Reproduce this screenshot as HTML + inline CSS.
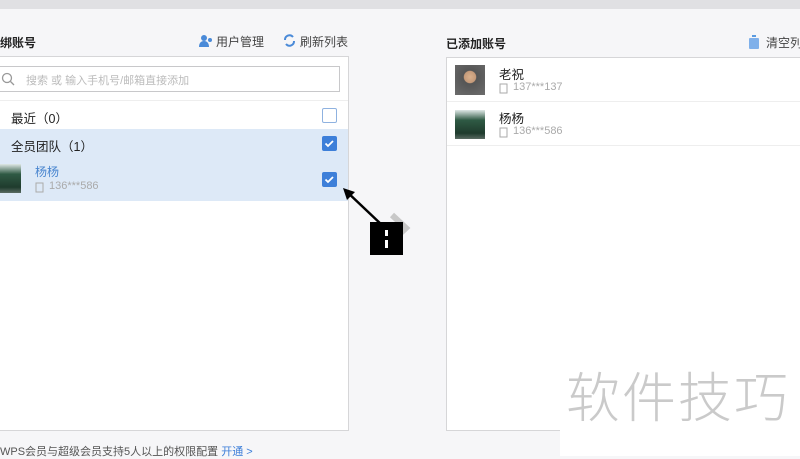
<!DOCTYPE html>
<html><head><meta charset="utf-8"><style>
*{margin:0;padding:0;box-sizing:border-box}
body{width:800px;height:456px;overflow:hidden;background:#f6f6f8;font-family:"Liberation Sans","Noto Sans CJK SC",sans-serif;position:relative;color:#222}
.a{position:absolute}
.t{font-size:12px;white-space:nowrap}
.cb{position:absolute;width:15px;height:15px;border-radius:2px}
.on{background:#3d7fd9}
.off{border:1.5px solid #8fb2e0;background:#fff}
.ph{font-size:11px;color:#aaa}
.av{position:absolute;background:linear-gradient(#dfe8e6 0%,#2f5a44 35%,#1f3b2d 80%,#5a6b62 100%)}
</style></head><body>
<div class="a" style="left:0;top:0;width:800px;height:9px;background:#e0e0e3"></div>

<div class="a t" style="left:0;top:34px;font-weight:bold;font-size:12px">绑账号</div>
<svg class="a" style="left:198px;top:34px" width="16" height="14"><circle cx="6" cy="4" r="3" fill="#4a8ad8"/><path d="M1 13c0-4 2-6 5-6s5 2 5 6z" fill="#4a8ad8"/><circle cx="12" cy="6" r="2" fill="#4a8ad8"/></svg>
<div class="a t" style="left:216px;top:33px;color:#444">用户管理</div>
<svg class="a" style="left:283px;top:34px" width="13" height="13"><path d="M2 6a4.5 4.5 0 0 1 8-3M11 7a4.5 4.5 0 0 1-8 3" stroke="#4a8ad8" stroke-width="2" fill="none"/></svg>
<div class="a t" style="left:300px;top:33px;color:#444">刷新列表</div>

<div class="a" style="left:-1px;top:56px;width:350px;height:375px;background:#fff;border:1px solid #d6d6d8"></div>
<div class="a" style="left:-1px;top:66px;width:341px;height:26px;border:1px solid #c8c8ca;background:#fff"></div>
<svg class="a" style="left:1px;top:72px" width="14" height="14"><circle cx="6" cy="6" r="4.5" stroke="#999" stroke-width="1.3" fill="none"/><path d="M9.5 9.5l3.5 3.5" stroke="#999" stroke-width="1.3"/></svg>
<div class="a t" style="left:26px;top:72px;color:#bbb;font-size:11px">搜索 或 输入手机号/邮箱直接添加</div>
<div class="a" style="left:0;top:100px;width:348px;height:1px;background:#eee"></div>
<div class="a t" style="left:11px;top:108px;font-size:12.5px">最近（0）</div>
<div class="cb off" style="left:322px;top:108px"></div>
<div class="a" style="left:0;top:129px;width:348px;height:72px;background:#dde9f7"></div>
<div class="a t" style="left:11px;top:136px;font-size:12.5px">全员团队（1）</div>
<div class="cb on" style="left:322px;top:136px"><svg width="15" height="15"><path d="M3.5 7.5l2.5 2.5 5-5" stroke="#fff" stroke-width="1.8" fill="none"/></svg></div>
<div class="av" style="left:0;top:164px;width:21px;height:29px"></div>
<div class="a t" style="left:35px;top:163px;color:#4a86cf;font-size:12px">杨杨</div>
<svg class="a" style="left:35px;top:182px" width="9" height="11"><rect x="1" y="1" width="7" height="9" stroke="#aaa" fill="none"/></svg>
<div class="a ph" style="left:49px;top:180px">136***586</div>
<div class="cb on" style="left:322px;top:172px"><svg width="15" height="15"><path d="M3.5 7.5l2.5 2.5 5-5" stroke="#fff" stroke-width="1.8" fill="none"/></svg></div>

<svg class="a" style="left:340px;top:185px" width="75" height="75"><path d="M52 30l14 13-14 13" stroke="#c8c8c8" stroke-width="6" fill="none"/><path d="M5 5l38 36" stroke="#000" stroke-width="2.5"/><path d="M3 3l12 4-8 8z" fill="#000"/><rect x="30" y="37" width="33" height="33" fill="#000"/><rect x="45" y="45" width="3" height="6" fill="#fff"/><rect x="45" y="55" width="3" height="8" fill="#fff"/></svg>

<div class="a t" style="left:446px;top:35px;font-weight:bold">已添加账号</div>
<svg class="a" style="left:748px;top:35px" width="12" height="14"><rect x="4" y="0" width="4" height="2" fill="#5b9be0"/><rect x="1" y="3" width="10" height="11" rx="1" fill="#7fb0ea"/></svg>
<div class="a t" style="left:766px;top:34px;color:#444">清空列表</div>
<div class="a" style="left:446px;top:57px;width:360px;height:374px;background:#fff;border:1px solid #d6d6d8"></div>
<div class="a" style="left:455px;top:65px;width:30px;height:30px;background:radial-gradient(circle at 50% 40%,#d9b08c 0,#c59a7a 25%,#555 28%,#6c6c6c 100%)"></div>
<div class="a t" style="left:499px;top:64px;font-size:12.5px">老祝</div>
<svg class="a" style="left:499px;top:83px" width="9" height="11"><rect x="1" y="1" width="7" height="9" stroke="#aaa" fill="none"/></svg>
<div class="a ph" style="left:513px;top:81px">137***137</div>
<div class="a" style="left:447px;top:101px;width:353px;height:1px;background:#eee"></div>
<div class="av" style="left:455px;top:110px;width:30px;height:29px"></div>
<div class="a t" style="left:499px;top:108px;font-size:12.5px">杨杨</div>
<svg class="a" style="left:499px;top:127px" width="9" height="11"><rect x="1" y="1" width="7" height="9" stroke="#aaa" fill="none"/></svg>
<div class="a ph" style="left:513px;top:125px">136***586</div>
<div class="a" style="left:447px;top:145px;width:353px;height:1px;background:#eee"></div>

<div class="a" style="left:560px;top:340px;width:240px;height:116px;background:#fff"></div>
<div class="a" style="left:566px;top:354px;font-size:54px;color:#cacaca;font-family:'Noto Sans CJK SC',sans-serif;font-weight:300;white-space:nowrap;letter-spacing:2px;line-height:80px">软件技巧</div>

<div class="a" style="left:0;top:443px;font-size:11px;color:#555;white-space:nowrap">WPS会员与超级会员支持5人以上的权限配置 <span style="color:#3d7fd9">开通 &gt;</span></div>
</body></html>
